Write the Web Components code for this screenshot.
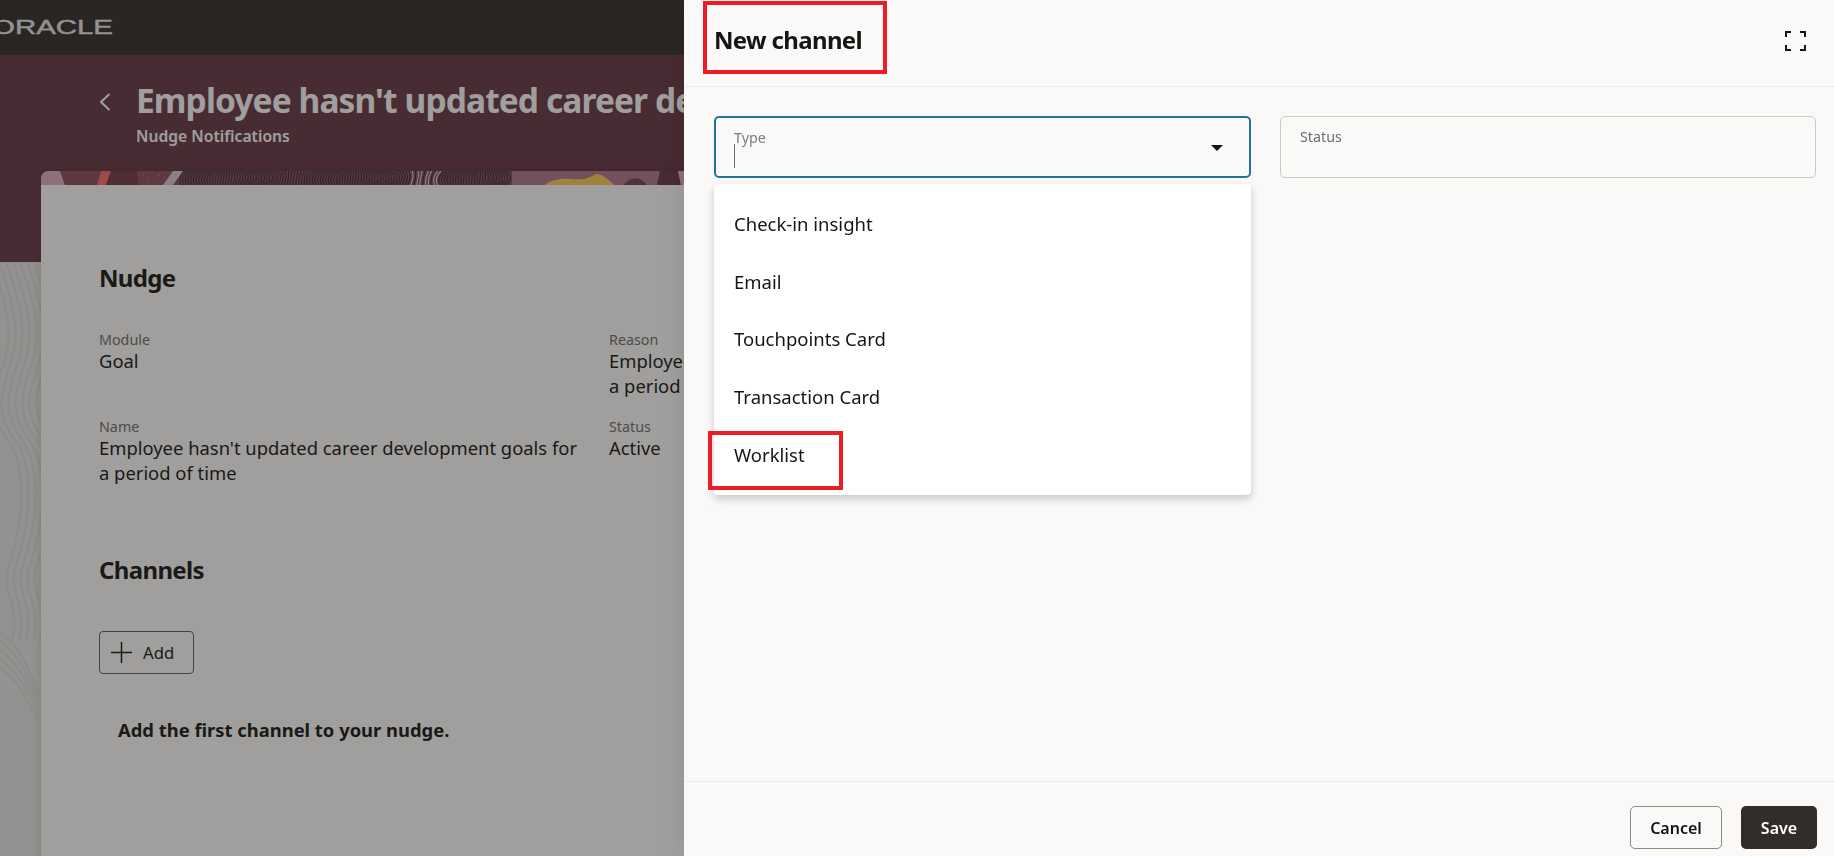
<!DOCTYPE html>
<html lang="en">
<head>
<meta charset="utf-8">
<title>New channel</title>
<style>
  html, body { margin: 0; height: 100%; overflow: hidden; background: #e9e8e6; }
  body { font-family: "Noto Sans", "Open Sans", sans-serif; color: #161513; }
</style>
</head>
<body>
<nudge-page>
  <nudge-card></nudge-card>
</nudge-page>
<page-scrim></page-scrim>
<channel-drawer>
  <type-select slot="fields" label="Type"></type-select>
  <text-field slot="fields" label="Status"></text-field>
</channel-drawer>

<script>
class NudgePage extends HTMLElement {
    constructor() {
        super()
        this.attachShadow({mode: "open"})
        this.shadowRoot.innerHTML = `
            <style>
                :host { display: block; width: 684px; height: 856px; overflow: hidden; position: relative; }
                #bar { height: 55px; background: #312d2a; overflow: hidden; display: flex; align-items: center; }
                #bar svg { display: block; margin-left: -8px; }
                #hero { height: 207px; background: #653644; box-sizing: border-box; padding: 23px 0 0 99px; display: flex; gap: 25px; align-items: flex-start; }
                #back { margin-top: 15px; flex: none; }
                h1 { margin: 0; font-size: 33.5px; line-height: 44px; font-weight: 700; letter-spacing: -0.9px; color: #fff; white-space: nowrap; }
                #sub { font-size: 15.7px; line-height: 22px; font-weight: 600; color: #fff; margin-top: 3px; }
                #lines { position: absolute; left: 0; top: 262px; }
                ::slotted(nudge-card) { position: absolute; left: 41px; top: 171px; }
            </style>
            <div id="bar">
                <svg width="125" height="24" viewBox="0 0 125 24"><text x="0" y="17.5" font-family="Liberation Sans" font-size="21" fill="#e9e8e6" stroke="#e9e8e6" stroke-width="0.4" textLength="121" lengthAdjust="spacingAndGlyphs">ORACLE</text></svg>
            </div>
            <div id="hero">
                <svg id="back" width="12" height="18" viewBox="0 0 12 18"><path d="M10.5 1 2 9l8.5 8" fill="none" stroke="#fff" stroke-width="2"/></svg>
                <div>
                    <h1>Employee hasn't updated career de</h1>
                    <div id="sub">Nudge Notifications</div>
                </div>
            </div>
            <svg id="lines" width="41" height="480" viewBox="0 0 41 480"></svg>
            <slot></slot>`
    }

    connectedCallback() {
        // contour lines on the strip left of the card
        const svg = this.shadowRoot.querySelector("#lines")
        let out = ""
        for (let i = 0; i < 7; i++) {
            const o = i * 7 - 8
            out += `<path d="M${o} 0 C${o + 14} 40 ${o + 22} 70 ${o + 12} 100 C${o + 2} 130 ${o - 4} 150 ${o + 14} 175 C${o + 34} 200 ${o + 34} 250 ${o + 18} 300 C${o + 6} 330 ${o + 30} 340 ${o + 20} 380" fill="none" stroke="#dfdedc" stroke-width="2.2"/>`
        }
        for (let i = 0; i < 5; i++) {
            const o = i * 9
            out += `<path d="M0 ${370 + o} C14 ${380 + o} 26 ${396 + o} 38 ${430 + o * .8}" fill="none" stroke="#dfdedc" stroke-width="2.2"/>`
        }
        svg.innerHTML = out
    }
}
customElements.define("nudge-page", NudgePage)

class NudgeCard extends HTMLElement {
    constructor() {
        super()
        this.attachShadow({mode: "open"})
        this.shadowRoot.innerHTML = `
            <style>
                :host { display: block; width: 760px; height: 700px; background: #fff; border-radius: 8px 8px 0 0; overflow: hidden; box-shadow: 0 0 10px rgba(0, 0, 0, 0.16); }
                #banner { display: block; }
                #body { padding: 77px 0 0 58px; }
                h2 { margin: 0; font-size: 24px; line-height: 32px; font-weight: 700; letter-spacing: -0.65px; }
                #fields { display: grid; grid-template-columns: 476px 400px; column-gap: 34px; margin-top: 37px; }
                .field { min-height: 87px; }
                .lab { font-size: 14.3px; line-height: 17px; color: #6f6e6c; }
                .val { font-size: 18.4px; line-height: 24.5px; color: #161513; white-space: nowrap; margin-top: 1px; }
                #channels { margin-top: 48.5px; }
                #add { margin-top: 45.5px; width: 95px; height: 43px; box-sizing: border-box; border: 1px solid #5f5e5c; border-radius: 4px; display: flex; align-items: center; gap: 11px; padding-left: 11px; font-size: 16.7px; }
                #empty { margin: 44px 0 0 19px; font-size: 18.4px; line-height: 24px; font-weight: 700; }
            </style>
            <svg id="banner" width="760" height="14" viewBox="0 0 760 14"></svg>
            <div id="body">
                <h2>Nudge</h2>
                <div id="fields">
                    <div class="field"><div class="lab">Module</div><div class="val">Goal</div></div>
                    <div class="field"><div class="lab">Reason</div><div class="val">Employee<br>a period</div></div>
                    <div class="field"><div class="lab">Name</div><div class="val">Employee hasn't updated career development goals for<br>a period of time</div></div>
                    <div class="field"><div class="lab">Status</div><div class="val">Active</div></div>
                </div>
                <h2 id="channels">Channels</h2>
                <div id="add">
                    <svg width="21" height="21" viewBox="0 0 21 21"><path d="M10.5 0v21M0 10.5h21" stroke="#161513" stroke-width="1.5"/></svg>
                    <span>Add</span>
                </div>
                <div id="empty">Add the first channel to your nudge.</div>
            </div>`
    }

    connectedCallback() {
        this.drawBanner()
    }

    // strip of artwork above the card, x values are relative to the card's left edge
    drawBanner() {
        const poly = (pts, fill) => `<polygon points="${pts}" fill="${fill}"/>`
        let out = `<rect width="760" height="14" fill="#7a4f60"/>`
        out += poly("0,0 19,0 24,14 0,14", "#e1acc0")
        out += poly("19,0 68,0 64,14 24,14", "#884b5b")
        out += poly("60,0 70,0 65,14 56,14", "#ff6a6c")
        out += poly("70,0 96,0 98,14 65,14", "#713848")
        out += poly("96,0 132,0 124,14 98,14", "#8d4e62")
        for (let i = 0; i < 6; i++) out += `<circle cx="${103 + i * 5}" cy="${4 + (i % 3) * 3}" r=".7" fill="#ff6a6c"/>`
        out += poly("132,0 142,0 132,14 122,14", "#d8c8cc")
        for (let x = 140; x < 470; x += 2.7) {
            const a = Math.sin(x * 0.05) * 4
            const light = x > 365 && x < 400 && Math.round(x) % 2 == 0
            out += `<path d="M${x + a} 0 Q${x - a} 7 ${x + a * .6 - 2} 14" fill="none" stroke="${light ? "#d9ccd1" : "#3f2631"}" stroke-width="1.1"/>`
        }
        out += `<rect x="471" width="290" height="14" fill="#af788c"/>`
        out += `<path d="M504 14 C510 9 520 7 530 8 C545 9 548 7 555 3 C562 3 568 9 573 14Z" fill="#ffcc59"/>`
        out += `<path d="M582 14 C590 6 598 4 606 14Z" fill="#733d50"/>`
        out += poly("619,0 637,0 640,14 616,14", "#653644")
        out += poly("637,0 643,0 643,14 640,14", "#e1acc0")
        this.shadowRoot.querySelector("#banner").innerHTML = out
    }
}
customElements.define("nudge-card", NudgeCard)

class PageScrim extends HTMLElement {
    constructor() {
        super()
        this.attachShadow({mode: "open"})
        this.shadowRoot.innerHTML = `
            <style>
                :host { display: block; position: fixed; inset: 0; background: rgba(33, 30, 28, 0.427); }
            </style>`
    }
}
customElements.define("page-scrim", PageScrim)

class TextField extends HTMLElement {
    constructor() {
        super()
        this.attachShadow({mode: "open"})
        this.shadowRoot.innerHTML = `
            <style>
                :host { display: block; height: 62px; box-sizing: border-box; border: 1px solid #cbc9c6; border-radius: 5px; padding: 11px 19px; }
                #label { font-size: 14.3px; line-height: 18px; color: #6f6e6c; }
            </style>
            <div id="label"></div>`
    }

    connectedCallback() {
        this.shadowRoot.querySelector("#label").textContent = this.getAttribute("label")
    }
}
customElements.define("text-field", TextField)

class TypeSelect extends HTMLElement {
    constructor() {
        super()
        this.attachShadow({mode: "open"})
        this.shadowRoot.innerHTML = `
            <style>
                :host { display: block; position: relative; height: 62px; box-sizing: border-box; border: 2px solid #1f749c; border-radius: 5px; padding: 11px 18px; }
                #label { font-size: 14.3px; line-height: 18px; color: #7b7a78; }
                #caret { width: 1px; height: 24px; background: #6f6e6c; margin-top: -3px; }
                #arrow { position: absolute; right: 26px; top: 27px; width: 0; height: 0; border: 6px solid transparent; border-top: 6px solid #161513; border-bottom: 0; }
                #menu { position: absolute; left: -2px; right: -2px; top: 66px; background: #fff; border-radius: 4px; box-shadow: 0 4px 8px rgba(0, 0, 0, 0.2); padding: 10.5px 0 11.5px; z-index: 2; }
                .item { height: 57.8px; box-sizing: border-box; padding-left: 20px; display: flex; align-items: center; font-size: 18.5px; position: relative; }
                .mark { position: absolute; left: -6px; top: 5px; width: 135px; height: 59px; box-sizing: border-box; border: 4px solid #ee1c25; }
            </style>
            <div id="label"></div>
            <div id="caret"></div>
            <div id="arrow"></div>
            <div id="menu">
                <div class="item">Check-in insight</div>
                <div class="item">Email</div>
                <div class="item">Touchpoints Card</div>
                <div class="item">Transaction Card</div>
                <div class="item">Worklist<span class="mark"></span></div>
            </div>`
    }

    connectedCallback() {
        this.shadowRoot.querySelector("#label").textContent = this.getAttribute("label")
    }
}
customElements.define("type-select", TypeSelect)

class ChannelDrawer extends HTMLElement {
    constructor() {
        super()
        this.attachShadow({mode: "open"})
        this.shadowRoot.innerHTML = `
            <style>
                :host { display: flex; flex-direction: column; position: fixed; left: 684px; right: 0; top: 0; bottom: 0; background: #fbf9f8; box-shadow: 0 0 24px rgba(0, 0, 0, 0.1); }
                #head { position: relative; height: 87px; box-sizing: border-box; border-bottom: 1px solid #eeecea; padding: 0 28px 0 30px; display: flex; align-items: center; justify-content: space-between; }
                h2 { margin: 0; font-size: 24px; font-weight: 700; letter-spacing: -0.65px; color: #161513; position: relative; top: -4px; }
                #mark { position: absolute; left: 19px; top: 1px; width: 184px; height: 73px; box-sizing: border-box; border: 4px solid #ee1c25; }
                #expand { display: block; position: relative; top: -2px; }
                #body { flex: 1; display: grid; grid-template-columns: 537px 536px; column-gap: 29px; align-content: start; padding: 29px 0 0 30px; }
                #foot { height: 75px; box-sizing: border-box; border-top: 1px solid #eeecea; padding: 24px 17px 0 0; display: flex; justify-content: flex-end; gap: 19px; }
                button { font: inherit; font-size: 16px; font-weight: 600; height: 43px; border-radius: 5px; box-sizing: border-box; }
                #cancel { width: 92px; background: transparent; border: 1px solid #8b8986; color: #161513; }
                #save { width: 76px; background: #312d2a; border: 0; color: #fff; }
            </style>
            <div id="head">
                <h2>New channel</h2>
                <span id="mark"></span>
                <svg id="expand" width="21" height="20" viewBox="0 0 21 20"><path d="M1 6V1h5M15 1h5v5M20 14v5h-5M6 19H1v-5" fill="none" stroke="#161513" stroke-width="2"/></svg>
            </div>
            <div id="body"><slot name="fields"></slot></div>
            <div id="foot">
                <button id="cancel">Cancel</button>
                <button id="save">Save</button>
            </div>`
    }
}
customElements.define("channel-drawer", ChannelDrawer)
</script>
</body>
</html>
